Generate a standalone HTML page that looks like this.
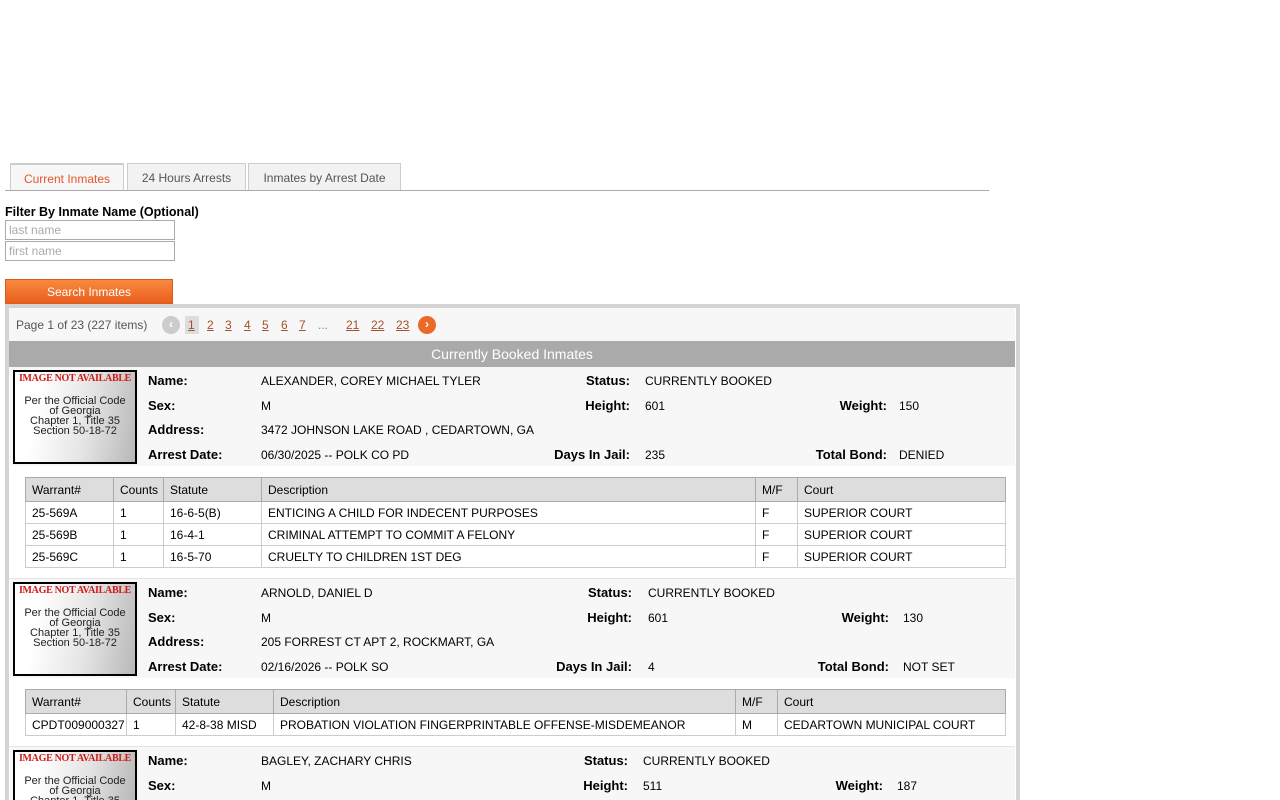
<!DOCTYPE html>
<html style="overflow:hidden;height:800px"><head><meta charset="utf-8"><style>
*{margin:0;padding:0;box-sizing:border-box}
body{width:1280px;height:800px;overflow:hidden;background:#fff;font-family:"Liberation Sans",Arial,sans-serif;font-size:12px;color:#000;position:relative}
.a{position:absolute;white-space:nowrap}
.tab{position:absolute;top:163px;height:28px;border:1px solid #ccc;border-bottom:none;background:#f2f2f2;color:#555;text-align:center;line-height:28px}
.lbl{position:absolute;font-weight:bold;font-size:13px;white-space:nowrap}
.r{text-align:right}
.photo{position:absolute;left:13px;width:124px;height:94px;border:2px solid #000;background:linear-gradient(100deg,#fff 20%,#e4e4e4 60%,#b8b8b8);text-align:center;font-family:Arial,"Liberation Sans",sans-serif;font-size:11px;line-height:10px;color:#222;overflow:hidden}
.photo b{display:block;font-family:"Liberation Serif",serif;color:#d01818;font-size:10px;margin:2px 0 12px;letter-spacing:-.3px}
table{position:absolute;left:25px;width:980px;border-collapse:collapse;font-size:12px;table-layout:fixed}
td{border:1px solid #ccc;height:22px;padding:0 6px;white-space:nowrap;overflow:hidden}
tr.h td{background:#ddd;height:24px;border-color:#aaa}
table{border:1px solid #999}
.info{position:absolute;left:10px;width:1005px;background:#f7f7f7}
.pg{color:#a0522d;text-decoration:underline;position:absolute;top:318px}
</style></head><body>
<div class="tab" style="left:10px;width:114px;background:#f7f7f7;color:#e8552a;border-color:#ccc;border-top:2px solid #ccc">Current Inmates</div>
<div class="tab" style="left:127px;width:119px">24 Hours Arrests</div>
<div class="tab" style="left:248px;width:153px">Inmates by Arrest Date</div>
<div class="a" style="left:5px;top:190px;width:984px;height:1px;background:#aaa"></div>
<div class="a" style="left:5px;top:205px;font-weight:bold;font-size:12.5px">Filter By Inmate Name (Optional)</div>
<div class="a" style="left:5px;top:220px;width:170px;height:20px;border:1px solid #aaa;color:#aaa;padding-left:3px;line-height:18px">last name</div>
<div class="a" style="left:5px;top:241px;width:170px;height:20px;border:1px solid #aaa;color:#aaa;padding-left:3px;line-height:18px">first name</div>
<div class="a" style="left:5px;top:279px;width:168px;height:25px;background:linear-gradient(#f88a3e,#ea5e1e);color:#fff;text-align:center;line-height:25px;border:1px solid #d95a1e">Search Inmates</div>
<div class="a" style="left:5px;top:304px;width:1015px;height:496px;border:4px solid #d4d4d4;border-bottom:none;background:#fff;overflow:hidden"></div>
<div class="a" style="left:9px;top:308px;width:1006px;height:33px;background:#f7f7f7"></div>
<div class="a" style="left:16px;top:318px;color:#555">Page 1 of 23 (227 items)</div>
<div class="a" style="left:162px;top:316px;width:18px;height:18px;border-radius:50%;background:#ccc;color:#fff;text-align:center;line-height:17px;font-weight:bold">‹</div>
<div class="a" style="left:185px;top:316px;width:14px;height:18px;background:#ddd"></div>
<span class="pg" style="left:188px">1</span><span class="pg" style="left:207px">2</span><span class="pg" style="left:225px">3</span><span class="pg" style="left:244px">4</span><span class="pg" style="left:262px">5</span><span class="pg" style="left:281px">6</span><span class="pg" style="left:299px">7</span>
<span class="a" style="left:318px;top:318px;color:#888">...</span>
<span class="pg" style="left:346px">21</span><span class="pg" style="left:371px">22</span><span class="pg" style="left:396px">23</span>
<div class="a" style="left:418px;top:316px;width:18px;height:18px;border-radius:50%;background:#ec6a26;color:#fff;text-align:center;line-height:17px;font-weight:bold">›</div>
<div class="a" style="left:9px;top:341px;width:1006px;height:26px;background:#aaa;color:#fff;font-size:14px;text-align:center;line-height:26px">Currently Booked Inmates</div>

<div class="info" style="top:367px;height:99px"></div>
<div class="photo" style="top:370px"><b>IMAGE NOT AVAILABLE</b>Per the Official Code<br>of Georgia<br>Chapter 1, Title 35<br>Section 50-18-72</div>
<div class="lbl" style="left:148px;top:373px">Name:</div><div class="a" style="left:261px;top:374px">ALEXANDER, COREY MICHAEL TYLER</div>
<div class="lbl" style="left:148px;top:398px">Sex:</div><div class="a" style="left:261px;top:399px">M</div>
<div class="lbl" style="left:148px;top:422px">Address:</div><div class="a" style="left:261px;top:423px">3472 JOHNSON LAKE ROAD , CEDARTOWN, GA</div>
<div class="lbl" style="left:148px;top:447px">Arrest Date:</div><div class="a" style="left:261px;top:448px">06/30/2025 -- POLK CO PD</div>
<div class="lbl r" style="left:480px;width:150px;top:373px">Status:</div><div class="a" style="left:645px;top:374px">CURRENTLY BOOKED</div>
<div class="lbl r" style="left:480px;width:150px;top:398px">Height:</div><div class="a" style="left:645px;top:399px">601</div>
<div class="lbl r" style="left:480px;width:150px;top:447px">Days In Jail:</div><div class="a" style="left:645px;top:448px">235</div>
<div class="lbl r" style="left:737px;width:150px;top:398px">Weight:</div><div class="a" style="left:899px;top:399px">150</div>
<div class="lbl r" style="left:737px;width:150px;top:447px">Total Bond:</div><div class="a" style="left:899px;top:448px">DENIED</div>
<table style="top:477px"><colgroup><col style="width:88px"><col style="width:50px"><col style="width:98px"><col style="width:494px"><col style="width:42px"><col style="width:208px"></colgroup>
<tr class="h"><td>Warrant#</td><td>Counts</td><td>Statute</td><td>Description</td><td>M/F</td><td>Court</td></tr>
<tr><td>25-569A</td><td>1</td><td>16-6-5(B)</td><td>ENTICING A CHILD FOR INDECENT PURPOSES</td><td>F</td><td>SUPERIOR COURT</td></tr>
<tr><td>25-569B</td><td>1</td><td>16-4-1</td><td>CRIMINAL ATTEMPT TO COMMIT A FELONY</td><td>F</td><td>SUPERIOR COURT</td></tr>
<tr><td>25-569C</td><td>1</td><td>16-5-70</td><td>CRUELTY TO CHILDREN 1ST DEG</td><td>F</td><td>SUPERIOR COURT</td></tr></table>
<div class="a" style="left:9px;top:578px;width:1006px;height:1px;background:#e4e4e4"></div>

<div class="info" style="top:579px;height:99px"></div>
<div class="photo" style="top:582px"><b>IMAGE NOT AVAILABLE</b>Per the Official Code<br>of Georgia<br>Chapter 1, Title 35<br>Section 50-18-72</div>
<div class="lbl" style="left:148px;top:585px">Name:</div><div class="a" style="left:261px;top:586px">ARNOLD, DANIEL D</div>
<div class="lbl" style="left:148px;top:610px">Sex:</div><div class="a" style="left:261px;top:611px">M</div>
<div class="lbl" style="left:148px;top:634px">Address:</div><div class="a" style="left:261px;top:635px">205 FORREST CT APT 2, ROCKMART, GA</div>
<div class="lbl" style="left:148px;top:659px">Arrest Date:</div><div class="a" style="left:261px;top:660px">02/16/2026 -- POLK SO</div>
<div class="lbl r" style="left:482px;width:150px;top:585px">Status:</div><div class="a" style="left:648px;top:586px">CURRENTLY BOOKED</div>
<div class="lbl r" style="left:482px;width:150px;top:610px">Height:</div><div class="a" style="left:648px;top:611px">601</div>
<div class="lbl r" style="left:482px;width:150px;top:659px">Days In Jail:</div><div class="a" style="left:648px;top:660px">4</div>
<div class="lbl r" style="left:739px;width:150px;top:610px">Weight:</div><div class="a" style="left:903px;top:611px">130</div>
<div class="lbl r" style="left:739px;width:150px;top:659px">Total Bond:</div><div class="a" style="left:903px;top:660px">NOT SET</div>
<table style="top:689px"><colgroup><col style="width:101px"><col style="width:49px"><col style="width:98px"><col style="width:462px"><col style="width:42px"><col style="width:228px"></colgroup>
<tr class="h"><td>Warrant#</td><td>Counts</td><td>Statute</td><td>Description</td><td>M/F</td><td>Court</td></tr>
<tr><td>CPDT009000327</td><td>1</td><td>42-8-38 MISD</td><td>PROBATION VIOLATION FINGERPRINTABLE OFFENSE-MISDEMEANOR</td><td>M</td><td>CEDARTOWN MUNICIPAL COURT</td></tr></table>
<div class="a" style="left:9px;top:746px;width:1006px;height:1px;background:#e4e4e4"></div>

<div class="info" style="top:747px;height:53px"></div>
<div class="photo" style="top:750px;height:50px;border-bottom:none"><b>IMAGE NOT AVAILABLE</b>Per the Official Code<br>of Georgia<br>Chapter 1, Title 35<br>Section 50-18-72</div>
<div class="lbl" style="left:148px;top:753px">Name:</div><div class="a" style="left:261px;top:754px">BAGLEY, ZACHARY CHRIS</div>
<div class="lbl" style="left:148px;top:778px">Sex:</div><div class="a" style="left:261px;top:779px">M</div>
<div class="lbl r" style="left:478px;width:150px;top:753px">Status:</div><div class="a" style="left:643px;top:754px">CURRENTLY BOOKED</div>
<div class="lbl r" style="left:478px;width:150px;top:778px">Height:</div><div class="a" style="left:643px;top:779px">511</div>
<div class="lbl r" style="left:733px;width:150px;top:778px">Weight:</div><div class="a" style="left:897px;top:779px">187</div>
</body></html>
